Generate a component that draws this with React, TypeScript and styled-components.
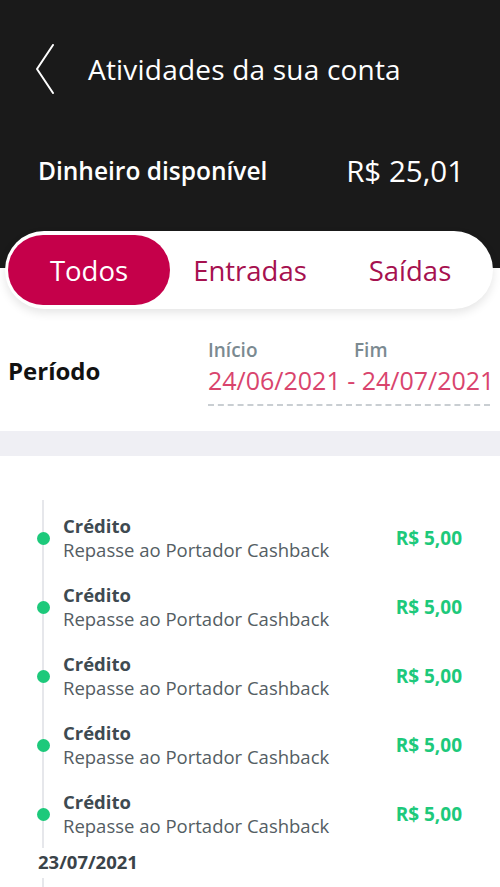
import styled, { createGlobalStyle } from "styled-components";

const items = [1, 2, 3, 4, 5];

function App() {
  return (
    <Screen>
      <GlobalStyles />
      <Header>
        <TitleRow>
          <Back aria-label="Voltar">
            <svg width="22" height="50" viewBox="0 0 22 50" fill="none">
              <path d="M19 1 L3 25 L19 49" stroke="#fff" strokeWidth="2" strokeLinecap="round" strokeLinejoin="round" />
            </svg>
          </Back>
          <Title>Atividades da sua conta</Title>
        </TitleRow>
        <BalanceRow>
          <BalanceLabel>Dinheiro disponível</BalanceLabel>
          <BalanceValue>R$ 25,01</BalanceValue>
        </BalanceRow>
      </Header>

      <TabsArea>
        <Tabs>
          <Tab $active>Todos</Tab>
          <Tab>Entradas</Tab>
          <Tab>Saídas</Tab>
        </Tabs>
      </TabsArea>

      <Period>
        <PeriodLabel>Período</PeriodLabel>
        <Range>
          <RangeLabels>
            <RangeLabel>Início</RangeLabel>
            <RangeLabel>Fim</RangeLabel>
          </RangeLabels>
          <Dates>24/06/2021 - 24/07/2021</Dates>
        </Range>
      </Period>

      <Divider />

      <List>
        <Timeline>
          {items.map((i) => (
            <Item key={i}>
              <Dot />
              <ItemText>
                <ItemType>Crédito</ItemType>
                <ItemDesc>Repasse ao Portador Cashback</ItemDesc>
              </ItemText>
              <Amount>R$ 5,00</Amount>
            </Item>
          ))}
        </Timeline>
        <DateHeading>23/07/2021</DateHeading>
        <Timeline $tail />
      </List>
    </Screen>
  );
}

export default App;

const font = `"Open Sans", "Liberation Sans", sans-serif`;

const Screen = styled.div`
  width: 500px;
  height: 887px;
  overflow: hidden;
  background: #fff;
  font-family: ${font};
`;

const Header = styled.header`
  background: #1a1a1a;
  padding: 44px 38px 46px 34px;
`;

const TitleRow = styled.div`
  display: flex;
  align-items: center;
  height: 50px;
`;

const Back = styled.button`
  display: flex;
  background: none;
  border: 0;
  padding: 0;
  width: 22px;
`;

const Title = styled.h1`
  margin: 0 0 0 32px;
  color: #fff;
  font-size: 28px;
  line-height: 36px;
  font-weight: 400;
  letter-spacing: 0.2px;
`;

const BalanceRow = styled.div`
  display: flex;
  align-items: center;
  justify-content: space-between;
  height: 30px;
  margin-top: 61px;
  padding-left: 4px;
`;

const BalanceLabel = styled.span`
  color: #fff;
  font-size: 24.5px;
  font-weight: 600;
`;

const BalanceValue = styled.span`
  color: #fff;
  font-size: 29.5px;
  font-weight: 400;
  margin-right: -2px;
`;

const TabsArea = styled.div`
  background: linear-gradient(#1a1a1a 0 37px, #fff 37px);
  padding: 0 7px 0 5px;
`;

const Tabs = styled.div`
  display: grid;
  grid-template-columns: 162px 1fr 1fr;
  align-items: center;
  height: 78px;
  padding: 4px 3px;
  box-sizing: border-box;
  background: #fff;
  border-radius: 39px;
  box-shadow: 0 4px 10px rgba(0, 0, 0, 0.1);
`;

const Tab = styled.button<{ $active?: boolean }>`
  height: 70px;
  border: 0;
  border-radius: 35px;
  padding: 0;
  font-family: ${font};
  font-size: 27.5px;
  font-weight: 500;
  background: ${(p) => (p.$active ? "#c5004a" : "transparent")};
  color: ${(p) => (p.$active ? "#fff" : "#a6114f")};
`;

const Period = styled.section`
  display: flex;
  align-items: flex-start;
  height: 122px;
  box-sizing: border-box;
  padding: 28px 0 0 8px;
`;

const PeriodLabel = styled.h2`
  flex-shrink: 0;
  margin: 17px 0 0 0;
  width: 200px;
  font-size: 24px;
  line-height: 33px;
  font-weight: 700;
  color: #111;
`;

const Range = styled.div`
  flex: 1;
  display: flex;
  flex-direction: column;
  min-width: 0;
`;

const RangeLabels = styled.div`
  display: flex;
  height: 26px;
  align-items: center;
`;

const RangeLabel = styled.span`
  width: 156px;
  font-size: 19px;
  font-weight: 600;
  color: #7b8a91;
`;

const Dates = styled.div`
  font-size: 25px;
  line-height: 34px;
  white-space: nowrap;
  color: #d9446d;
  padding: 0 0 7px;
  border-bottom: 2px dashed #c9ced2;
  margin-right: 10px;
`;

const Divider = styled.div`
  height: 25px;
  background: #efeff4;
`;

const List = styled.div`
  padding-top: 44px;
`;

const Timeline = styled.div<{ $tail?: boolean }>`
  margin-left: 42px;
  border-left: 2px solid #e6e7eb;
  padding: 14px 0 10px 0;
  display: flex;
  flex-direction: column;
  gap: 21px;
  ${(p) => p.$tail && "padding: 0; min-height: 20px;"}
`;

const Item = styled.div`
  position: relative;
  display: flex;
  align-items: center;
  padding: 0 38px 0 19px;
  height: 48px;
`;

const Dot = styled.span`
  position: absolute;
  left: -7.5px;
  top: 17.5px;
  width: 13px;
  height: 13px;
  border-radius: 50%;
  background: #1dc97b;
`;

const ItemText = styled.div`
  flex: 1;
  display: flex;
  flex-direction: column;
`;

const ItemType = styled.span`
  font-size: 18.5px;
  line-height: 24px;
  font-weight: 700;
  color: #3e4a51;
`;

const ItemDesc = styled.span`
  font-size: 18.5px;
  line-height: 24px;
  color: #545d63;
`;

const Amount = styled.span`
  font-size: 19px;
  font-weight: 700;
  color: #1dc97b;
`;

const DateHeading = styled.div`
  padding: 2px 38px 4px;
  font-size: 18.5px;
  line-height: 24px;
  font-weight: 700;
  color: #3a4349;
`;

const GlobalStyles = createGlobalStyle`
  body {
    margin: 0;
    background: #fff;
  }
  * {
    -webkit-font-smoothing: antialiased;
  }
`;
